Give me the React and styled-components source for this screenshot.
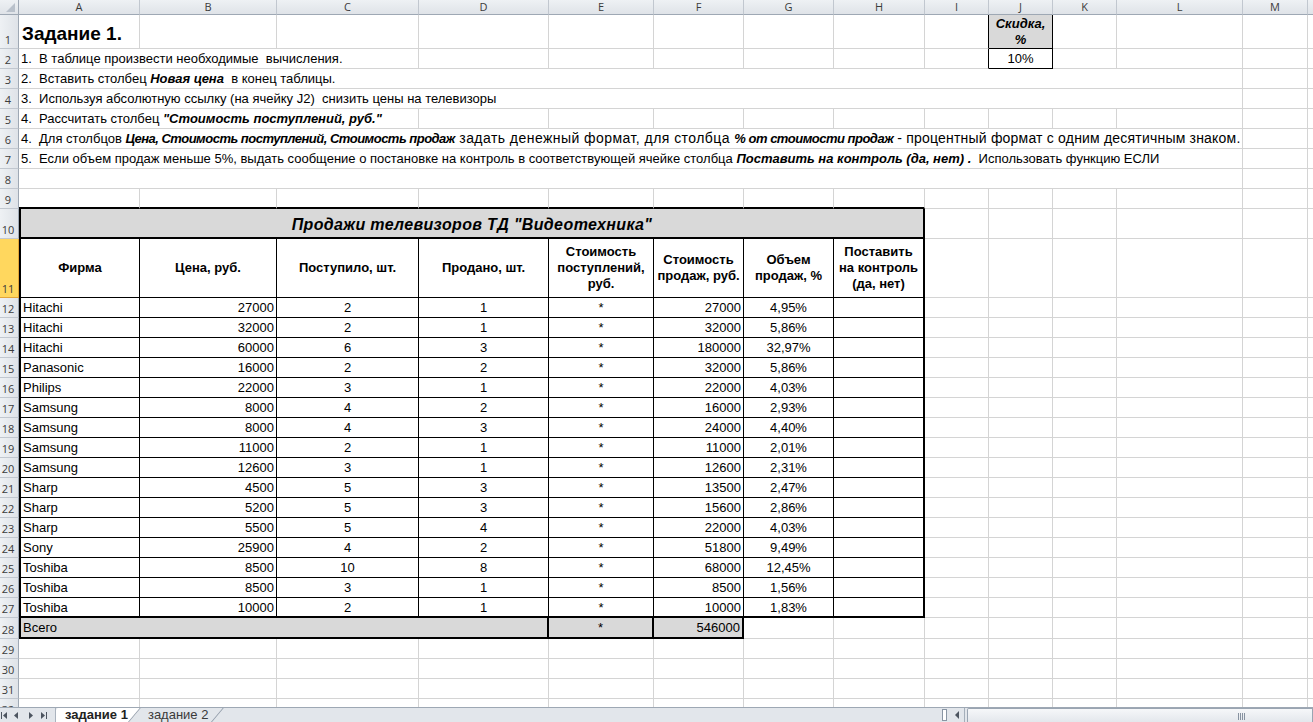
import React from 'react';
import styled, { createGlobalStyle } from 'styled-components';

const GlobalStyle = createGlobalStyle`
  html, body {
    margin: 0;
    padding: 0;
    background: #fff;
    overflow: hidden;
  }
  body {
    font-family: "Liberation Sans", Arial, sans-serif;
  }
`;

// column widths: row numbers, then A..N
const COLS = [19, 121, 137, 142, 130, 105, 90, 90, 91, 64, 64, 64, 126, 65, 64];
const LETTERS = 'ABCDEFGHIJKLM'.split('');
const TEMPLATE = COLS.map((w) => `${w}px`).join(' ');

const GRID = '#d4d4d4';
const LINES = {
  grid: `1px solid ${GRID}`,
  thin: '1px solid #000',
  thick: '2px solid #000',
  none: '0 none',
};
const JUSTIFY = { left: 'flex-start', center: 'center', right: 'flex-end' };

const Page = styled.div`
  display: flex;
  flex-direction: column;
  height: 722px;
  width: 1313px;
  overflow: hidden;
`;

const Sheet = styled.div`
  flex: 1;
  overflow: hidden;
`;

const Row = styled.div`
  display: grid;
  grid-template-columns: ${TEMPLATE};
  height: ${(p) => p.$h || 20}px;
`;

const ColHead = styled.div`
  box-sizing: border-box;
  display: flex;
  align-items: center;
  justify-content: center;
  background: linear-gradient(#eef1f4, #dfe3e8);
  border-right: 1px solid #c1c7cf;
  border-bottom: 1px solid #9ea8b4;
  font-family: "Open Sans", "Liberation Sans", sans-serif;
  font-size: 11px;
  color: #3b3b3b;
  line-height: 14px;
`;

const Corner = styled(ColHead)`
  justify-content: flex-end;
  align-items: flex-end;
  border-right-color: #9ea8b4;
`;

const RowNum = styled.div`
  box-sizing: border-box;
  display: flex;
  align-items: flex-end;
  justify-content: center;
  padding: 0 2px 1px 0;
  background: ${(p) => (p.$active ? '#ffd75e' : 'linear-gradient(90deg, #eef1f4, #dfe3e8)')};
  border-right: 1px solid ${(p) => (p.$active ? '#e2a438' : '#9ea8b4')};
  border-bottom: 1px solid ${(p) => (p.$active ? '#e2a438' : '#c1c7cf')};
  font-family: "Open Sans", "Liberation Sans", sans-serif;
  font-size: 11px;
  line-height: 14px;
  color: #3b3b3b;
`;

const Cell = styled.div`
  grid-column: span ${(p) => p.$span || 1};
  box-sizing: border-box;
  min-width: 0;
  display: flex;
  align-items: ${(p) => p.$valign || 'center'};
  justify-content: ${(p) => JUSTIFY[p.$align || 'left']};
  text-align: ${(p) => p.$align || 'left'};
  padding: 0 2px;
  border-right: ${(p) => LINES[p.$r || 'grid']};
  border-bottom: ${(p) => LINES[p.$b || 'grid']};
  border-left: ${(p) => (p.$l ? LINES[p.$l] : 'none')};
  background: ${(p) => (p.$fill ? '#d9d9d9' : '#fff')};
  font-size: 13px;
  line-height: 15px;
  color: #000;
  white-space: pre;
  overflow: hidden;
`;

const Heading = styled(Cell)`
  align-items: flex-end;
  padding: 0 0 3px 3px;
  font-size: 19px;
  font-weight: 700;
  line-height: 22px;
`;

const Note = styled(Cell)`
  padding-left: 2px;
`;

const Em = styled.span`
  font-weight: 700;
  font-style: italic;
  letter-spacing: ${(p) => p.$track || 0}px;
`;

// a run typed in another size inside the same line
const Run = styled.span`
  font-size: ${(p) => p.$size}px;
  letter-spacing: ${(p) => p.$track || 0}px;
`;

const Label = styled(Cell)`
  font-weight: 700;
  font-style: ${(p) => (p.$italic ? 'italic' : 'normal')};
  white-space: normal;
  line-height: 16px;
`;

const Title = styled(Cell)`
  font-weight: 700;
  font-style: italic;
  font-size: 16px;
  letter-spacing: 0.35px;
  padding-top: 2px;
`;

const blanks = (from, to, props = {}) =>
  Array.from({ length: to - from + 1 }, (_, i) => <Cell key={`x${from + i}`} {...props} />);

const SALES = [
  ['Hitachi', 27000, 2, 1, 27000, '4,95%'],
  ['Hitachi', 32000, 2, 1, 32000, '5,86%'],
  ['Hitachi', 60000, 6, 3, 180000, '32,97%'],
  ['Panasonic', 16000, 2, 2, 32000, '5,86%'],
  ['Philips', 22000, 3, 1, 22000, '4,03%'],
  ['Samsung', 8000, 4, 2, 16000, '2,93%'],
  ['Samsung', 8000, 4, 3, 24000, '4,40%'],
  ['Samsung', 11000, 2, 1, 11000, '2,01%'],
  ['Samsung', 12600, 3, 1, 12600, '2,31%'],
  ['Sharp', 4500, 5, 3, 13500, '2,47%'],
  ['Sharp', 5200, 5, 3, 15600, '2,86%'],
  ['Sharp', 5500, 5, 4, 22000, '4,03%'],
  ['Sony', 25900, 4, 2, 51800, '9,49%'],
  ['Toshiba', 8500, 10, 8, 68000, '12,45%'],
  ['Toshiba', 8500, 3, 1, 8500, '1,56%'],
  ['Toshiba', 10000, 2, 1, 10000, '1,83%'],
];

const HEADERS = [
  ['Фирма'],
  ['Цена, руб.'],
  ['Поступило, шт.'],
  ['Продано, шт.'],
  ['Стоимость', 'поступлений,', 'руб.'],
  ['Стоимость', 'продаж, руб.'],
  ['Объем', 'продаж, %'],
  ['Поставить', 'на контроль', '(да, нет)'],
];

/* ---------- sheet tabs & scroll bar ---------- */

const TabBar = styled.div`
  height: 14px;
  flex: none;
  display: flex;
  align-items: flex-start;
  background: #e2e6eb;
  border-top: 1px solid #9ea8b4;
  overflow: hidden;
`;

const Nav = styled.div`
  width: 55px;
  height: 14px;
  flex: none;
  border-right: 1px solid #aab3be;
  display: flex;
  align-items: flex-start;
`;

const Tabs = styled.div`
  display: flex;
  height: 14px;
  padding: 0 20px 0 4px;
  overflow: hidden;
`;

const SheetTab = styled.div`
  position: relative;
  z-index: ${(p) => (p.$active ? 2 : 1)};
  padding: 0 ${(p) => (p.$active ? '1px 0 5px' : '4px 0 19px')};
  font-size: 13px;
  line-height: 14px;
  font-weight: ${(p) => (p.$active ? 700 : 400)};
  color: ${(p) => (p.$active ? '#222' : '#3a3a3a')};
  &::before {
    content: '';
    display: ${(p) => (p.$active ? 'block' : 'none')};
    position: absolute;
    top: 0;
    bottom: 0;
    left: -14px;
    right: 0;
    z-index: -1;
    background: #fff;
    transform: skewX(-40deg);
    transform-origin: bottom left;
  }
  &::after {
    content: '';
    position: absolute;
    top: 0;
    bottom: 0;
    right: 0;
    width: 1px;
    background: #8e99a7;
    transform: skewX(-40deg);
    transform-origin: bottom left;
  }
`;

const Scroller = styled.div`
  margin-left: auto;
  width: 372px;
  height: 14px;
  display: flex;
  align-items: flex-start;
`;

const Split = styled.div`
  width: 5px;
  height: 12px;
  margin: 1px 3px 0 1px;
  box-sizing: border-box;
  border: 1px solid #8a96a4;
  background: #fff;
`;

const ScrollArrow = styled.div`
  width: 14px;
  height: 14px;
  display: flex;
  justify-content: center;
  border-right: 1px solid #a5afba;
`;

const Thumb = styled.div`
  flex: 1;
  height: 14px;
  box-sizing: border-box;
  margin-left: 2px;
  border: 1px solid #9aa5b2;
  border-bottom: none;
  border-radius: 2px 0 0 0;
  background: linear-gradient(#f6f7f9, #e3e7ec);
  display: flex;
  justify-content: flex-start;
  padding-left: 270px;
`;

function NavArrows() {
  return (
    <svg width="55" height="14" viewBox="0 0 55 14">
      <g fill="#4d5560">
        <rect x="1" y="4" width="1" height="7" />
        <polygon points="7,4 7,11 3,7.5" />
        <polygon points="18,4 18,11 14,7.5" />
        <polygon points="29,4 29,11 33,7.5" />
        <polygon points="41,4 41,11 45,7.5" />
        <rect x="46" y="4" width="1" height="7" />
      </g>
    </svg>
  );
}

export default function App() {
  const total = 546000;
  return (
    <Page>
      <GlobalStyle />
      <Sheet>
        <Row $h={15}>
          <Corner>
            <svg width="18" height="14" viewBox="0 0 18 14">
              <polygon points="15,3 15,12 6,12" fill="#b9c1cb" />
            </svg>
          </Corner>
          {LETTERS.map((l) => (
            <ColHead key={l}>{l}</ColHead>
          ))}
          <ColHead />
        </Row>

        <Row $h={34}>
          <RowNum>1</RowNum>
          <Heading>Задание 1.</Heading>
          {blanks(2, 8)}
          <Cell $r="thin" />
          <Label $italic $fill $align="center" $r="thin" $b="thin">
            Скидка, %
          </Label>
          {blanks(11, 14)}
        </Row>

        <Row>
          <RowNum>2</RowNum>
          <Note $span={3}>1.  В таблице произвести необходимые  вычисления.</Note>
          {blanks(4, 8)}
          <Cell $r="thin" />
          <Cell $align="center" $r="thin" $b="thin">10%</Cell>
          {blanks(11, 14)}
        </Row>

        <Row>
          <RowNum>3</RowNum>
          <Note $span={12}>
            2.  Вставить столбец <Em>Новая цена</Em>  в конец таблицы.
          </Note>
          {blanks(13, 14)}
        </Row>

        <Row>
          <RowNum>4</RowNum>
          <Note $span={12}>3.  Используя абсолютную ссылку (на ячейку J2)  снизить цены на телевизоры</Note>
          {blanks(13, 14)}
        </Row>

        <Row>
          <RowNum>5</RowNum>
          <Note $span={3}>
            4.  Рассчитать столбец <Em>"Стоимость поступлений, руб."</Em>
          </Note>
          {blanks(4, 14)}
        </Row>

        <Row>
          <RowNum>6</RowNum>
          <Note $span={12}>
            4.  Для столбцов <Em $track={-0.5}>Цена, Стоимость поступлений, Стоимость продаж</Em>
            <Run $size={14} $track={0.45}> задать денежный формат, для столбца </Run>
            <Em $track={-0.5}>% от стоимости продаж</Em>
            <Run $size={14} $track={0.2}> - процентный формат с одним десятичным знаком.</Run>
          </Note>
          {blanks(13, 14)}
        </Row>

        <Row>
          <RowNum>7</RowNum>
          <Note $span={12}>
            5.  Если объем продаж меньше 5%, выдать сообщение о постановке на контроль в соответствующей ячейке
            столбца <Em>Поставить на контроль (да, нет) .</Em>  Использовать функцию ЕСЛИ
          </Note>
          {blanks(13, 14)}
        </Row>

        <Row>
          <RowNum>8</RowNum>
          <Note $span={12} />
          {blanks(13, 14)}
        </Row>

        <Row>
          <RowNum>9</RowNum>
          {blanks(1, 8, { $b: 'thick' })}
          {blanks(9, 14)}
        </Row>

        <Row $h={30}>
          <RowNum>10</RowNum>
          <Title $span={8} $fill $align="center" $l="thick" $r="thick" $b="thick">
            Продажи телевизоров ТД "Видеотехника"
          </Title>
          {blanks(9, 14)}
        </Row>

        <Row $h={59}>
          <RowNum $active>11</RowNum>
          {HEADERS.map((lines, i) => (
            <Label
              key={lines[0] + i}
              $align="center"
              $l={i === 0 ? 'thick' : undefined}
              $r={i === 7 ? 'thick' : 'thin'}
              $b="thin"
            >
              <span>
                {lines.map((t, j) => (
                  <React.Fragment key={t}>
                    {j > 0 && <br />}
                    {t}
                  </React.Fragment>
                ))}
              </span>
            </Label>
          ))}
          {blanks(9, 14)}
        </Row>

        {SALES.map(([firm, price, inQty, soldQty, sum, share], i) => {
          const b = i === SALES.length - 1 ? 'thick' : 'thin';
          return (
            <Row key={i}>
              <RowNum>{12 + i}</RowNum>
              <Cell $l="thick" $r="thin" $b={b}>{firm}</Cell>
              <Cell $align="right" $r="thin" $b={b}>{price}</Cell>
              <Cell $align="center" $r="thin" $b={b}>{inQty}</Cell>
              <Cell $align="center" $r="thin" $b={b}>{soldQty}</Cell>
              <Cell $align="center" $r="thin" $b={b}>*</Cell>
              <Cell $align="right" $r="thin" $b={b}>{sum}</Cell>
              <Cell $align="center" $r="thin" $b={b}>{share}</Cell>
              <Cell $r="thick" $b={b} />
              {blanks(9, 14)}
            </Row>
          );
        })}

        <Row $h={21}>
          <RowNum>28</RowNum>
          <Cell $span={4} $fill $l="thick" $r="thick" $b="thick">Всего</Cell>
          <Cell $fill $align="center" $r="thick" $b="thick">*</Cell>
          <Cell $fill $align="right" $r="thick" $b="thick">{total}</Cell>
          {blanks(7, 14)}
        </Row>

        {[29, 30, 31, 32].map((n) => (
          <Row key={n}>
            <RowNum>{n}</RowNum>
            {blanks(1, 14)}
          </Row>
        ))}
      </Sheet>

      <TabBar>
        <Nav>
          <NavArrows />
        </Nav>
        <Tabs>
          <SheetTab $active>задание 1</SheetTab>
          <SheetTab>задание 2</SheetTab>
        </Tabs>
        <Scroller>
          <Split />
          <ScrollArrow>
            <svg width="8" height="14" viewBox="0 0 8 14">
              <polygon points="6,3 6,11 2,7" fill="#4d5560" />
            </svg>
          </ScrollArrow>
          <Thumb>
            <svg width="8" height="12" viewBox="0 0 8 12">
              <g fill="#8792a0">
                <rect x="0" y="4" width="1" height="7" />
                <rect x="2" y="4" width="1" height="7" />
                <rect x="4" y="4" width="1" height="7" />
                <rect x="6" y="4" width="1" height="7" />
              </g>
            </svg>
          </Thumb>
        </Scroller>
      </TabBar>
    </Page>
  );
}
